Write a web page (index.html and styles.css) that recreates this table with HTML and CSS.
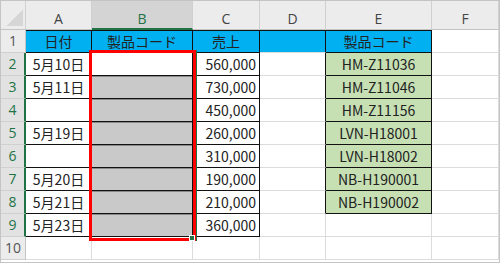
FILE: index.html
```html
<!DOCTYPE html>
<html lang="ja">
<head>
<meta charset="utf-8">
<link rel="stylesheet" href="styles.css">
</head>
<body>
<div class="sheet">
  <div class="c hd corner"></div>
  <div class="c hd">A</div>
  <div class="c hd sel">B</div>
  <div class="c hd">C</div>
  <div class="c hd">D</div>
  <div class="c hd">E</div>
  <div class="c hd">F</div>

  <div class="c rh">1</div>
  <div class="c blue bd top">日付</div>
  <div class="c blue bd top">製品コード</div>
  <div class="c blue bd top">売上</div>
  <div class="c blue bdr top"></div>
  <div class="c blue bd top">製品コード</div>
  <div class="c"></div>

  <div class="c rh sel">2</div>
  <div class="c bd">5月10日</div>
  <div class="c bd"></div>
  <div class="c bd num">560,000</div>
  <div class="c bdr"></div>
  <div class="c green bd">HM-Z11036</div>
  <div class="c"></div>

  <div class="c rh sel">3</div>
  <div class="c bd">5月11日</div>
  <div class="c bd gray"></div>
  <div class="c bd num">730,000</div>
  <div class="c bdr"></div>
  <div class="c green bd">HM-Z11046</div>
  <div class="c"></div>

  <div class="c rh sel">4</div>
  <div class="c bd"></div>
  <div class="c bd gray"></div>
  <div class="c bd num">450,000</div>
  <div class="c bdr"></div>
  <div class="c green bd">HM-Z11156</div>
  <div class="c"></div>

  <div class="c rh sel">5</div>
  <div class="c bd">5月19日</div>
  <div class="c bd gray"></div>
  <div class="c bd num">260,000</div>
  <div class="c bdr"></div>
  <div class="c green bd">LVN-H18001</div>
  <div class="c"></div>

  <div class="c rh sel">6</div>
  <div class="c bd"></div>
  <div class="c bd gray"></div>
  <div class="c bd num">310,000</div>
  <div class="c bdr"></div>
  <div class="c green bd">LVN-H18002</div>
  <div class="c"></div>

  <div class="c rh sel">7</div>
  <div class="c bd">5月20日</div>
  <div class="c bd gray"></div>
  <div class="c bd num">190,000</div>
  <div class="c bdr"></div>
  <div class="c green bd">NB-H190001</div>
  <div class="c"></div>

  <div class="c rh sel">8</div>
  <div class="c bd">5月21日</div>
  <div class="c bd gray"></div>
  <div class="c bd num">210,000</div>
  <div class="c bdr"></div>
  <div class="c green bd">NB-H190002</div>
  <div class="c"></div>

  <div class="c rh sel">9</div>
  <div class="c bd">5月23日</div>
  <div class="c bd gray"></div>
  <div class="c bd num">360,000</div>
  <div class="c"></div>
  <div class="c"></div>
  <div class="c"></div>

  <div class="c rh">10</div>
  <div class="c"></div>
  <div class="c"></div>
  <div class="c"></div>
  <div class="c"></div>
  <div class="c"></div>
  <div class="c"></div>

  <div class="mark"></div>
  <div class="handle"></div>
</div>
</body>
</html>
```

FILE: styles.css
```css
* { box-sizing: border-box; }
html, body { margin: 0; padding: 0; background: #fff; }

.sheet {
  position: relative;
  width: 500px;
  height: 263px;
  border: 1px solid #c4c4c4;
  display: grid;
  grid-template-columns: 25px 66px 101px 67px 66px 106px 1fr;
  grid-template-rows: 29px repeat(10, 23px) 1fr;
  background: #fff;
  font-family: "Noto Sans CJK JP", "Noto Sans", sans-serif;
  font-size: 14px;
  color: #222;
}

.c {
  border-right: 1px solid #dcdcdc;
  border-bottom: 1px solid #dcdcdc;
  display: flex;
  align-items: center;
  justify-content: center;
  line-height: 1;
  white-space: nowrap;
  overflow: hidden;
}

.hd {
  background: #ececec;
  color: #444;
  padding-top: 8px;
  border-right-color: #d0d0d0;
  border-bottom-color: #c4c4c4;
  font-family: "Open Sans", "Noto Sans", sans-serif;
  font-size: 14px;
}
.hd.sel {
  background: #d4d4d4;
  color: #217346;
  border-bottom: 2px solid #217346;
}
.corner {
  background:
    linear-gradient(135deg, transparent 50%, #d6d6d6 50%) no-repeat right 2px bottom 3px / 16px 16px,
    #ececec;
}

.rh {
  background: #ececec;
  color: #555;
  border-right-color: #c4c4c4;
  border-bottom-color: #d0d0d0;
  font-family: "Open Sans", "Noto Sans", sans-serif;
  font-size: 14px;
}
.rh.sel {
  color: #217346;
  background: #e2e2e2;
  border-right: 2px solid #217346;
}

.blue { background: #00b0f0; }
.green { background: #c6e0b4; }
.gray { background: #c9c9c9; box-shadow: inset 0 1px 0 #8a8a8a; }

.bd { border-right-color: #111; border-bottom-color: #111; }
.bdr { border-right-color: #111; }
.top { box-shadow: inset 0 1px 0 #111; }

.num { justify-content: flex-end; padding-right: 3px; }

.mark {
  position: absolute;
  left: 88px;
  top: 49px;
  width: 107px;
  height: 191px;
  border: 3px solid #ff0000;
  box-shadow: 1px 0 0 #217346;
}

.handle {
  position: absolute;
  left: 188px;
  top: 234px;
  width: 6px;
  height: 6px;
  background: #217346;
  border: 1px solid #fff;
}
```
